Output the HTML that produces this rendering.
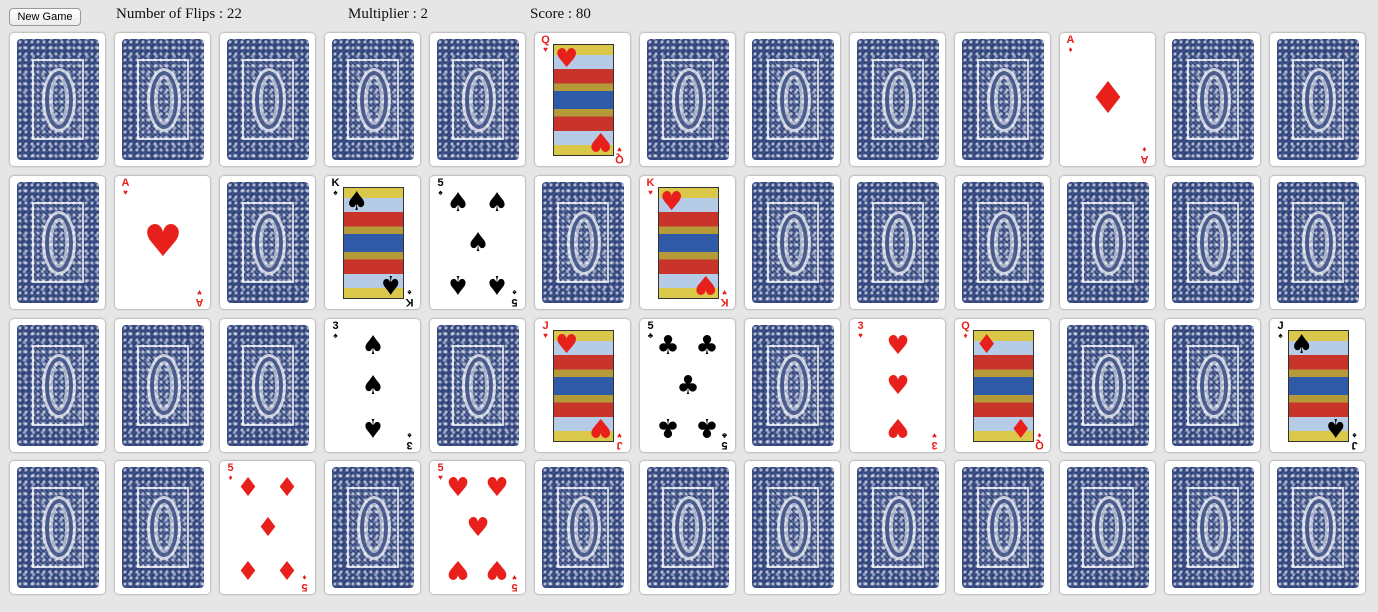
<!DOCTYPE html>
<html><head><meta charset="utf-8"><style>
body{margin:0;background:#e6e6e6;width:1378px;height:612px;overflow:hidden;font-family:"Liberation Serif",serif;position:relative}
.btn{position:absolute;left:9px;top:8px;width:70px;height:16px;border:1px solid #9a9a9a;border-radius:4px;background:linear-gradient(#fff,#ececec);font:11px "Liberation Sans",sans-serif;text-align:center;line-height:16px;color:#000}
.lbl{position:absolute;top:6px;font-size:15px;color:#111}
.card{position:absolute;width:95px;height:133px;background:#fff;border-radius:4px;box-shadow:0 0 2px rgba(0,0,0,.45)}
.back{position:absolute;left:7px;top:6px;width:82px;height:121px;border-radius:4px;background-color:#2f437c;
background-image:radial-gradient(circle,rgba(255,255,255,.6) 1.3px,transparent 1.9px),radial-gradient(circle,rgba(255,255,255,.45) 1.2px,transparent 2.2px),repeating-linear-gradient(135deg,rgba(255,255,255,.12) 0 1px,transparent 1px 4px);
background-size:6px 6px,9px 9px,auto;background-position:0 0,3px 4px,0 0;overflow:hidden}
.back::before{content:"";position:absolute;left:15px;top:20px;width:48px;height:77px;border:2px solid rgba(255,255,255,.75);background:repeating-linear-gradient(45deg,rgba(255,255,255,.2) 0 1px,transparent 1px 3px)}
.back::after{content:"";position:absolute;left:25px;top:29px;width:28px;height:58px;border-radius:50%;border:3px solid rgba(255,255,255,.7);box-shadow:inset 0 0 0 4px rgba(47,67,124,.8),inset 0 0 0 8px rgba(255,255,255,.55)}
.rk{position:absolute;left:6px;top:2px;font:bold 11px "Liberation Sans",sans-serif;text-align:center;width:9px;line-height:11px}
.rk span{display:block;font-size:8px;line-height:8px}
.rk2{left:auto;right:6px;top:auto;bottom:2px;transform:rotate(180deg)}
.pip{position:absolute;font-family:"DejaVu Sans",sans-serif;line-height:1;transform:translate(-50%,-50%)}
.red{color:#e8201c}.blk{color:#000}
.court{position:absolute;left:18px;top:11px;width:59px;height:110px;border:1px solid #333;overflow:hidden;
background:linear-gradient(#d9c84a 0 9%,#b6cbe6 9% 22%,#c8342a 22% 35%,#b59a3a 35% 42%,#2f5aa8 42% 50%,#2f5aa8 50% 58%,#b59a3a 58% 65%,#c8342a 65% 78%,#b6cbe6 78% 91%,#d9c84a 91%)}
.court i{position:absolute;font-style:normal;font-family:"DejaVu Sans",sans-serif;font-size:26px;line-height:1}
</style></head><body>
<div class="btn">New Game</div>
<div class="lbl" style="left:116px">Number of Flips : 22</div>
<div class="lbl" style="left:348px">Multiplier : 2</div>
<div class="lbl" style="left:530px">Score : 80</div>
<div id="g"></div>
<script>
var faces={"0,5":"Q♥","0,10":"A♦","1,1":"A♥","1,3":"K♠","1,4":"5♠","1,6":"K♥","2,3":"3♠","2,5":"J♥","2,6":"5♣","2,8":"3♥","2,9":"Q♦","2,12":"J♠","3,2":"5♦","3,4":"5♥"};
var rows=[33,176,319,461],h="";
for(var r=0;r<4;r++)for(var c=0;c<13;c++){
 var x=10+c*105,y=rows[r],f=faces[r+","+c];
 h+='<div class="card" style="left:'+x+'px;top:'+y+'px">';
 if(!f){h+='<div class="back"></div>';}
 else{
  var rank=f[0],s=f[1],cl=(s=="♥"||s=="♦")?"red":"blk";
  h+='<div class="rk '+cl+'">'+rank+'<span>'+s+'</span></div><div class="rk rk2 '+cl+'">'+rank+'<span>'+s+'</span></div>';
  var P=function(px,py,sz,rot){return '<div class="pip '+cl+'" style="left:'+px+'px;top:'+py+'px;font-size:'+sz+'px'+(rot?';transform:translate(-50%,-50%) rotate(180deg)':'')+'">'+s+'</div>';};
  if(rank=="A")h+=P(48,66,44);
  else if(rank=="5")h+=P(28,27,26)+P(67,27,26)+P(48,67,26)+P(28,108,26,1)+P(67,108,26,1);
  else if(rank=="3")h+=P(48,27,26)+P(48,67,26)+P(48,108,26,1);
  else h+='<div class="court"><i class="'+cl+'" style="left:1px;top:1px">'+s+'</i><i class="'+cl+'" style="right:1px;bottom:1px;transform:rotate(180deg)">'+s+'</i></div>';
 }
 h+='</div>';
}
document.getElementById("g").innerHTML=h;
</script>
</body></html>
